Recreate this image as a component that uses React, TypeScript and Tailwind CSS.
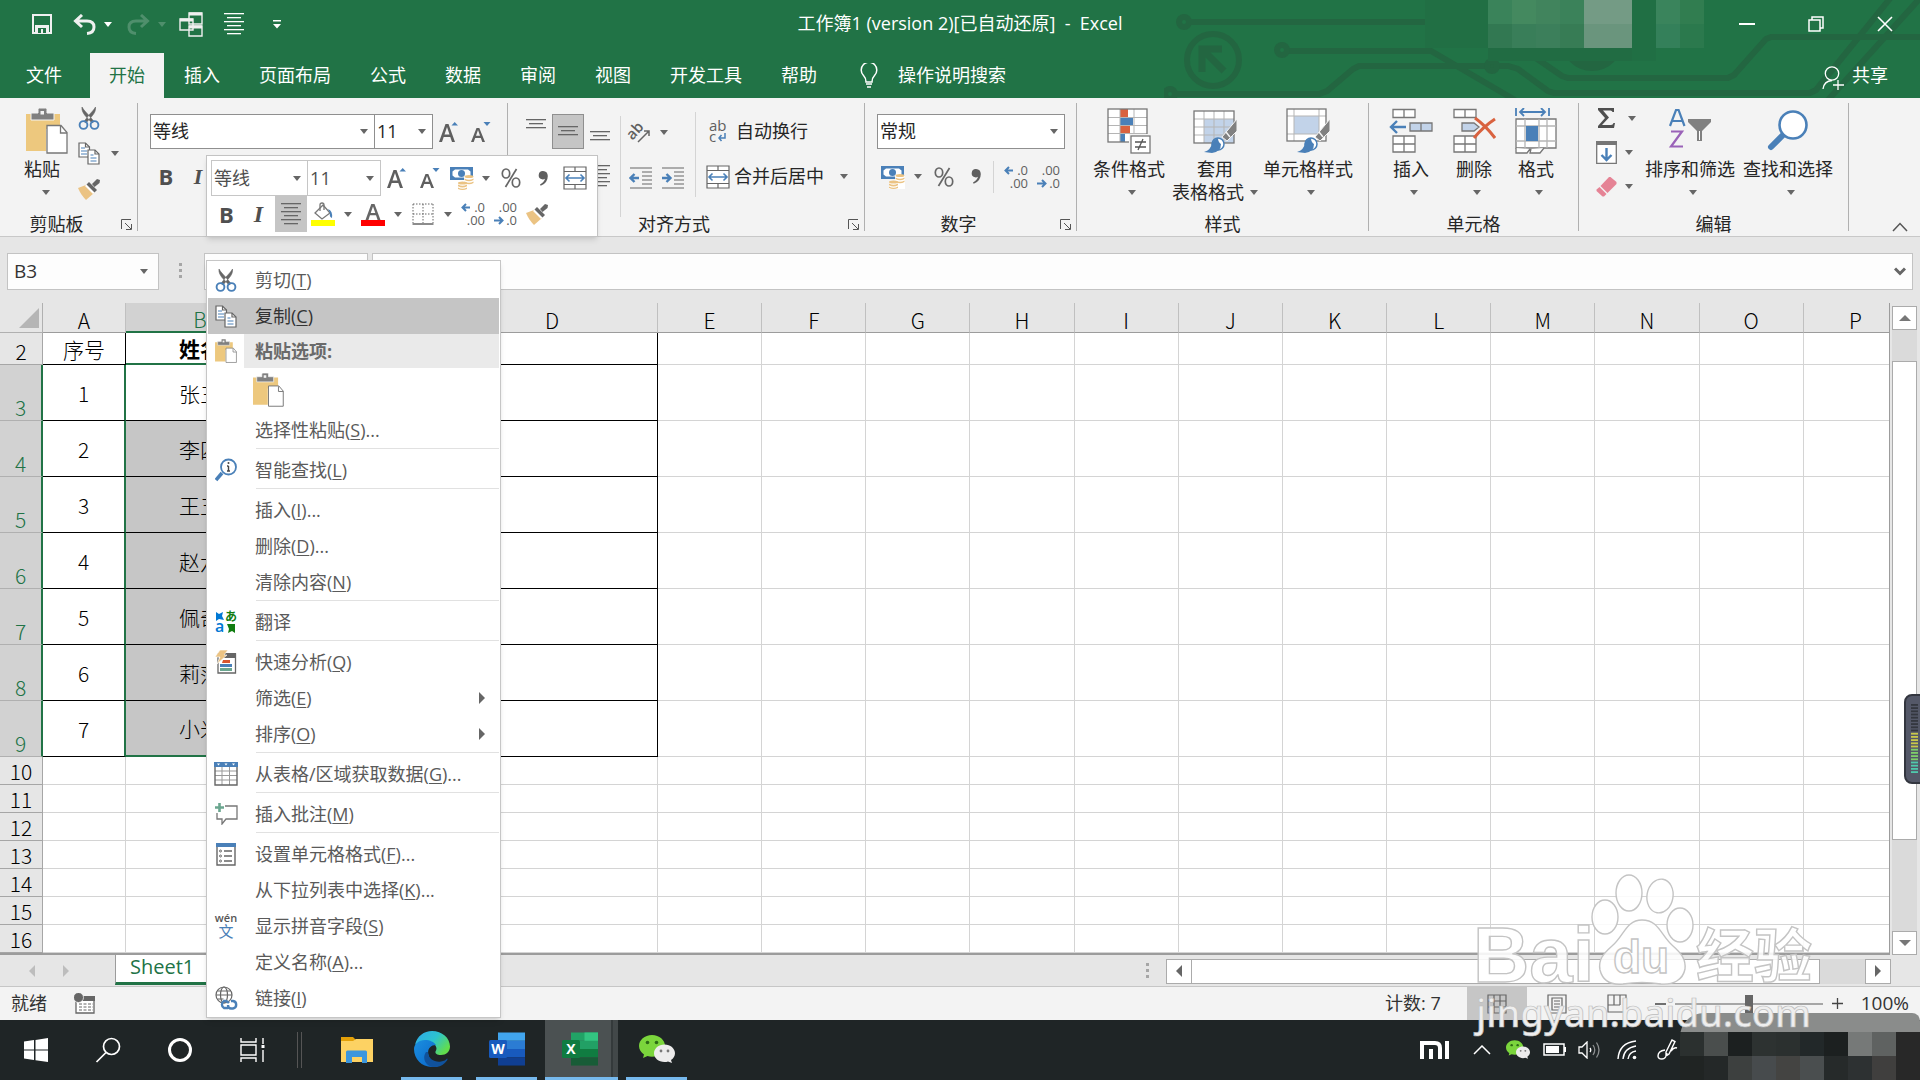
import type { ReactNode } from "react";

type IconProps = { className?: string };

/* ---------- small shared glyphs ---------- */

function Caret({ className = "text-[#666666]" }: IconProps) {
  return (
    <svg width="8" height="5" viewBox="0 0 8 5" className={`shrink-0 ${className}`}>
      <path d="M0 0h8L4 5z" fill="currentColor" />
    </svg>
  );
}

function Launcher() {
  return (
    <svg width="11" height="11" viewBox="0 0 11 11" fill="none" stroke="#555" strokeWidth="1">
      <path d="M.5 10V.5H10M4 4l6 6M10.500 5v5.500H5" />
    </svg>
  );
}

function Lines({ rows, className = "text-[#666666]" }: { rows: [number, number][]; className?: string }) {
  return (
    <svg width="22" height={rows.length * 4 + 1} viewBox={`0 0 22 ${rows.length * 4 + 1}`} className={className}>
      {rows.map(([x, w], i) => (
        <rect key={i} x={x} y={i * 4 + 1} width={w} height="1.300" fill="currentColor" />
      ))}
    </svg>
  );
}

const centered: [number, number][] = [[1, 20], [4, 14], [1, 20], [4, 14], [1, 20], [4, 14]];
const short3: [number, number][] = [[1, 20], [4, 14], [1, 20]];

function ScissorsIcon() {
  return (
    <svg width="22" height="23" viewBox="0 0 22 23" fill="none">
      <path d="M4 0C3.500 3 5 6 7 8.500L14 16l2-1.500L10.500 8C8 5 5.500 3 4 0zM17.500 0c.5 3-1 6-3 8.500L8 16l-2-1.500L11 8c2.500-3 5-5 6.500-8z" fill="#666" stroke="#666" strokeWidth=".6" />
      <circle cx="5.500" cy="18" r="3.900" stroke="#4a80b8" strokeWidth="1.900" />
      <circle cx="16.500" cy="18" r="3.900" stroke="#4a80b8" strokeWidth="1.900" />
    </svg>
  );
}

function CopyIcon() {
  return (
    <svg width="22" height="23" viewBox="0 0 22 23" fill="#fff" stroke="#666" strokeWidth="1.200">
      <path d="M1 1h6.500l4 4v10H1z" />
      <path d="M7.500 1v4h4" fill="none" />
      <path d="M3 6h4M3 9h6M3 12h6" stroke="#4a80b8" />
      <path d="M10 8h7l4 4v10H10z" />
      <path d="M17 8v4h4" fill="none" />
      <path d="M12.500 13h3M12.500 16h6M12.500 19h6" stroke="#4a80b8" />
    </svg>
  );
}

function BrushIcon() {
  return (
    <svg width="24" height="22" viewBox="0 0 24 22">
      <path d="M1 10l8-3 8 8-8 7C6 19 3 15 1 10z" fill="#ebc383" />
      <path d="M8 8l3-3 8 8-3 3z" fill="#fff" />
      <path d="M9.500 6.500L12 4l8 8-2.500 2.500z" fill="#666" />
      <path d="M15 6l5-5 3 1-.500 3-5 4z" fill="#666" />
    </svg>
  );
}

function PasteIcon({ className = "w-[42px] h-[46px]" }: IconProps) {
  return (
    <svg viewBox="0 0 42 46" className={className}>
      <path d="M0 6h34v15H20v22H0z" fill="#edc87e" />
      <path d="M5 5h7V1.500A1.500 1.500 0 0 1 13.500 0h6A1.500 1.500 0 0 1 21 1.500V5h7v7H5z" fill="#808080" stroke="#f3f3f3" />
      <rect x="14.500" y="3" width="3.500" height="3.500" fill="#f3f3f3" />
      <path d="M21 17.500h14l6 7V45H21z" fill="#fff" stroke="#777" strokeWidth="1.300" />
      <path d="M34.500 18v7H41" fill="none" stroke="#777" strokeWidth="1.300" />
    </svg>
  );
}

function FontSizeIcon({ grow }: { grow?: boolean }) {
  return (
    <svg width="22" height="24" viewBox="0 0 22 24">
      {grow ? (
        <>
          <path d="M1 22L7.500 4h3L17 22h-3l-1.700-5H5.700L4 22zM6.500 14.500h5L9 7z" fill="#5f5f5f" />
          <path d="M13.500 5.500h6.500L16.700 2z" fill="#4a80b8" />
        </>
      ) : (
        <>
          <path d="M1 22L6.500 8h2.800L15 22h-2.700l-1.500-4H5.200l-1.500 4zM6 15.700h4L8 10z" fill="#5f5f5f" />
          <path d="M13.500 2h7L17 6z" fill="#4a80b8" />
        </>
      )}
    </svg>
  );
}

function CurrencyIcon() {
  return (
    <svg width="24" height="24" viewBox="0 0 24 24">
      <rect x="0" y="1" width="23" height="13" fill="#4a80b8" />
      <path d="M2.500 5.500L5 3.500h13l2.500 2v4l-2.500 2H5l-2.500-2z" fill="#fff" />
      <circle cx="11.500" cy="7.500" r="3.500" fill="#4a80b8" />
      <path d="M14 10h10v14H8v-7h6z" fill="#fff" />
      <g fill="#ebc383">
        <ellipse cx="19" cy="10.500" rx="4.500" ry="1.600" />
        <path d="M14.500 12.500q4.500 2.500 9 0v1.600q-4.500 2.500-9 0zM14.500 15.500q4.500 2.500 9 0v1.600q-4.500 2.500-9 0z" />
        <ellipse cx="12.500" cy="17" rx="4.500" ry="1.500" />
        <path d="M8 18.600q4.500 2.500 9 0v1.600q-4.500 2.500-9 0zM8 21.400q4.500 2.500 9 0v1.600q-4.500 2-9 0z" />
      </g>
    </svg>
  );
}

function CommaIcon() {
  return (
    <svg width="11" height="15" viewBox="0 0 11 15">
      <path d="M5 0a4.200 4.200 0 0 0-1 8.300q1.500.300 3-.500Q6 11.500 2 13.500l.7 1.300Q9.800 12 9.800 5 9.600.2 5 0z" fill="#5f5f5f" />
    </svg>
  );
}

function PercentIcon() {
  return (
    <svg width="20" height="20" viewBox="0 0 20 20" fill="none" stroke="#666" strokeWidth="1.700">
      <ellipse cx="5" cy="5.500" rx="3.700" ry="4.500" />
      <ellipse cx="15" cy="14.500" rx="3.700" ry="4.500" />
      <path d="M15.500 1L4.500 19" />
    </svg>
  );
}

function MergeIcon() {
  return (
    <svg width="24" height="24" viewBox="0 0 24 24" fill="#fff" stroke="#666" strokeWidth="1.200">
      <path d="M1 1h22v22H1zM1 5.500h22M1 18.500h22M12 1v4.500M12 18.500V23" />
      <path d="M3 12h18M6.500 8.500L3 12l3.500 3.500M17.500 8.500L21 12l-3.500 3.500" stroke="#4a80b8" strokeWidth="1.600" fill="none" />
    </svg>
  );
}

function DecimalIcon({ less }: { less?: boolean }) {
  return (
    <svg width="24" height="24" viewBox="0 0 24 24" fill="#5f5f5f" fontFamily="Open Sans, sans-serif" fontSize="13" className="overflow-visible">
      <text x="24" y="10" textAnchor="end">{less ? ".00" : ".0"}</text>
      <text x="24" y="23" textAnchor="end">{less ? ".0" : ".00"}</text>
      {less ? (
        <path d="M1 18.500h8M6 15l3.500 3.500L6 22" fill="none" stroke="#4a80b8" strokeWidth="2" />
      ) : (
        <path d="M9 5.500H2M5 2L1.500 5.500 5 9" fill="none" stroke="#4a80b8" strokeWidth="2" />
      )}
    </svg>
  );
}

function IndentIcon({ right }: { right?: boolean }) {
  return (
    <svg width="24" height="22" viewBox="0 0 24 22" fill="none" stroke="#666" strokeWidth="1.200">
      <path d="M1 1h22M13 5h10M13 9h10M13 13h10M13 17h10M1 21h22" />
      {right ? (
        <path d="M1 11h8M5.500 7l4 4-4 4" stroke="#4a80b8" strokeWidth="2.400" />
      ) : (
        <path d="M10 11H2M5.500 7l-4 4 4 4" stroke="#4a80b8" strokeWidth="2.400" />
      )}
    </svg>
  );
}

function OrientationIcon() {
  return (
    <svg width="22" height="22" viewBox="0 0 22 22" className="overflow-visible">
      <text x="0" y="16" transform="rotate(-48 6 14)" fontSize="15" fontWeight="600" fill="#5f5f5f" fontFamily="Open Sans, sans-serif">ab</text>
      <path d="M9 21L20 10M15 10h5v5" fill="none" stroke="#666" strokeWidth="1.500" />
    </svg>
  );
}

function WrapIcon() {
  return (
    <svg width="20" height="24" viewBox="0 0 20 24" fontFamily="Open Sans, sans-serif" fontSize="15" fill="#5f5f5f" className="overflow-visible">
      <text x="1" y="11">ab</text>
      <text x="1" y="22">c</text>
      <path d="M17 13v5h-6M13.500 15L11 18l2.500 3" fill="none" stroke="#4a80b8" strokeWidth="1.500" />
    </svg>
  );
}

function BucketIcon() {
  return (
    <svg width="24" height="24" viewBox="0 0 24 24">
      <path d="M4 11l8-8 7 8-8 6z" fill="#fff" stroke="#777" strokeWidth="1.300" />
      <path d="M9 9V3q0-2 2-2t2 2v5" fill="none" stroke="#777" strokeWidth="1.300" />
      <path d="M17 7q5 2 4 9-3-1-2-5z" fill="#4a80b8" />
      <rect y="18" width="24" height="6" fill="#ffff00" />
    </svg>
  );
}

function FontColorIcon() {
  return (
    <svg width="24" height="24" viewBox="0 0 24 24">
      <path d="M4.500 18L10.300 2h3.200L19.500 18h-2.900l-1.600-4.700H9L7.400 18zM9.700 11h4.600L12 4.500z" fill="#666" />
      <rect y="18" width="24" height="6" fill="#ff0000" />
    </svg>
  );
}

function BorderIcon() {
  return (
    <svg width="22" height="22" viewBox="0 0 22 22" stroke="#666" fill="none">
      <path d="M1 1h20M1 11h20M1 1v19M11 1v19M21 1v19" strokeDasharray="1.500 1.500" />
      <path d="M.5 21h21" strokeWidth="1.500" />
    </svg>
  );
}

/* ---------- large ribbon icons ---------- */

function ConditionalIcon() {
  return (
    <svg width="44" height="46" viewBox="0 0 44 46">
      <rect x="1" y="1" width="39" height="33" fill="#fff" />
      <rect x="13" y="1" width="8" height="8" fill="#d9623f" />
      <rect x="13" y="10" width="13" height="8" fill="#4a80b8" />
      <rect x="13" y="18" width="10" height="8" fill="#d9623f" />
      <rect x="13" y="26" width="5" height="8" fill="#4a80b8" />
      <path d="M1 9.500h39M1 17.500h39M1 25.500h39M13 1v33M27 1v33" stroke="#b5b5b5" fill="none" />
      <rect x="1" y="1" width="39" height="33" fill="none" stroke="#777" strokeWidth="1.300" />
      <rect x="22" y="26" width="22" height="20" fill="#f3f3f3" />
      <rect x="24" y="28" width="19" height="17" fill="#fff" stroke="#777" strokeWidth="1.300" />
      <path d="M28 34h11M28 39h11M36 31l-5 11" stroke="#555" strokeWidth="1.300" />
    </svg>
  );
}

function StylePen() {
  return (
    <>
      <path d="M44 11v12L34 33l-5-4z" fill="#808080" stroke="#f3f3f3" />
      <path d="M33 24l4 5" stroke="#f3f3f3" strokeWidth="1.500" />
      <circle cx="25" cy="36" r="6" fill="#fff" stroke="#4a80b8" strokeWidth="1.500" />
      <path d="M11 44q7-2 8-9 2-4 6-5 0 4 3 6 0 8-9 9z" fill="#4a80b8" />
    </>
  );
}

function TableStyleIcon() {
  return (
    <svg width="44" height="46" viewBox="0 0 44 46">
      <rect x="1" y="3" width="40" height="32" fill="#fff" />
      <rect x="11" y="11" width="30" height="24" fill="#c2d3e9" />
      <path d="M1 11h40M1 19h40M1 27h40M11 3v32M21 3v32M31 3v32" stroke="#b5b5b5" fill="none" />
      <rect x="1" y="3" width="40" height="32" fill="none" stroke="#777" strokeWidth="1.300" />
      <StylePen />
    </svg>
  );
}

function CellStyleIcon() {
  return (
    <svg width="44" height="46" viewBox="0 0 44 46">
      <rect x="1" y="1" width="39" height="32" fill="#fff" />
      <rect x="8" y="8" width="25" height="18" fill="#c2d3e9" />
      <path d="M1 8h39M1 26h39M8 1v32M33 1v32" stroke="#b5b5b5" fill="none" />
      <rect x="1" y="1" width="39" height="32" fill="none" stroke="#777" strokeWidth="1.300" />
      <StylePen />
    </svg>
  );
}

function InsertCellsIcon() {
  return (
    <svg width="44" height="46" viewBox="0 0 44 46" fill="#fff" stroke="#777" strokeWidth="1.300">
      <path d="M4 1.500h22v8H4zM15 1.500v8M4 28h22v16H4zM4 36h22M15 28v16" />
      <path d="M21 15h22v8H21zM32 15v8" fill="#c2d3e9" />
      <path d="M17 19H2M8 13l-6 6 6 6" stroke="#4a80b8" strokeWidth="2.400" fill="none" />
    </svg>
  );
}

function DeleteCellsIcon() {
  return (
    <svg width="44" height="46" viewBox="0 0 44 46" fill="#fff" stroke="#777" strokeWidth="1.300">
      <path d="M2 1.500h22v8H2zM13 1.500v8M2 28h22v16H2zM2 36h22M13 28v16" />
      <path d="M10 15h12l5 4-5 4H10z" fill="#c2d3e9" />
      <path d="M23 10q11 8 20 20M43 11Q31 19 22 30" stroke="#d9623f" strokeWidth="3" fill="none" />
    </svg>
  );
}

function FormatCellsIcon() {
  return (
    <svg width="44" height="46" viewBox="0 0 44 46" fill="#fff" stroke="#777" strokeWidth="1.300">
      <path d="M2 11h40v29H2z" />
      <path d="M2 18h40M2 33h40M11 11v29M25 11v29M33 11v29" stroke="#b5b5b5" />
      <rect x="12" y="18" width="12" height="15" fill="#4a80b8" stroke="none" />
      <path d="M2 40v5h11l3-4M17 41l-1 4h10l4-5" />
      <path d="M2 0v8M35 0v8M6 4h25M10 0L6 4l4 4M27 0l4 4-4 4" stroke="#4a80b8" strokeWidth="1.800" fill="none" />
    </svg>
  );
}

function SortFilterIcon() {
  return (
    <svg width="44" height="46" viewBox="0 0 44 46">
      <path d="M2 18L8 2h2.600L16.500 18M4.500 13h9.500" fill="none" stroke="#4a80b8" strokeWidth="2.200" />
      <path d="M3 23.500h11L3 38.500h12" fill="none" stroke="#9a62b8" strokeWidth="2.200" />
      <path d="M20 11h23v3l-9 9v10h-5V23l-9-9z" fill="#808080" />
      <path d="M31.500 23v9" stroke="#fff" />
    </svg>
  );
}

function FindIcon() {
  return (
    <svg width="44" height="46" viewBox="0 0 44 46">
      <path d="M18 26L5 39" stroke="#4a80b8" strokeWidth="6" strokeLinecap="round" />
      <circle cx="27" cy="17" r="13.500" fill="#fff" stroke="#4a80b8" strokeWidth="2.600" />
    </svg>
  );
}

/* ---------- ribbon building blocks ---------- */

function BigButton({ icon, lines, className, caretBeside }: { icon: ReactNode; lines: string[]; className: string; caretBeside?: boolean }) {
  return (
    <button type="button" className={`flex flex-col items-center pt-[5px] ${className}`}>
      <span className="flex h-[46px] items-center">{icon}</span>
      <span className="mt-[3px] leading-6 whitespace-nowrap">{lines[0]}</span>
      <span className={`flex h-[22px] items-center leading-[22px] whitespace-nowrap ${caretBeside ? "gap-[6px]" : "pl-[6px]"}`}>
        {caretBeside && lines[1]}
        <Caret />
      </span>
    </button>
  );
}

function Group({ label, launcher, className, inner = "", children }: { label: string; launcher?: boolean; className: string; inner?: string; children: ReactNode }) {
  return (
    <section aria-label={label} className={`flex h-32 shrink-0 flex-col border-r border-[#b0b0b0] ${className}`}>
      <div className={`flex h-[114px] ${inner}`}>{children}</div>
      <div className="flex h-[14px] items-center leading-[14px]">
        <span className={`flex-1 text-center ${launcher ? "pr-2" : ""}`}>{label}</span>
        {launcher && (
          <button type="button" aria-label={`${label}设置`} className="mr-[5px]">
            <Launcher />
          </button>
        )}
      </div>
    </section>
  );
}

function Slot({ label, className = "", children }: { label: string; className?: string; children: ReactNode }) {
  return (
    <button type="button" aria-label={label} className={`flex shrink-0 items-center justify-center ${className}`}>
      {children}
    </button>
  );
}

function Combo({ label, value, className }: { label: string; value: string; className: string }) {
  return (
    <label className={`flex items-center border bg-white pr-[6px] pl-[2px] ${className}`}>
      <select aria-label={label} defaultValue={value} className="min-w-0 flex-1 appearance-none bg-transparent outline-none">
        <option>{value}</option>
      </select>
      <Caret />
    </label>
  );
}

/* ---------- title bar ---------- */

const mosaic: [number, number, number, number, string][] = [
  [1425, 0, 63, 48, "#216f44"],
  [1488, 0, 24, 24, "#3a835a"], [1512, 0, 24, 24, "#44895f"], [1536, 0, 24, 24, "#41845d"], [1560, 0, 24, 24, "#3b825a"],
  [1584, 0, 48, 24, "#749b85"], [1632, 0, 24, 61, "#206f44"], [1656, 0, 24, 24, "#3a845c"], [1680, 0, 24, 24, "#317d50"],
  [1488, 24, 24, 24, "#327852"], [1512, 24, 24, 24, "#397e59"], [1536, 24, 24, 24, "#3c7f5b"], [1560, 24, 24, 24, "#377c55"],
  [1584, 24, 48, 24, "#6a957d"], [1656, 24, 24, 24, "#34805a"], [1680, 24, 24, 24, "#2b794d"],
  [1488, 48, 144, 13, "#216c43"],
];

function Circuit() {
  return (
    <svg width="756" height="98" viewBox="1164 0 756 98" className="absolute top-0 right-0" fill="none" stroke="#236641" strokeWidth="6" aria-hidden="true">
      <circle cx="1184" cy="22" r="5" />
      <path d="M1190 22h235" />
      <circle cx="1213" cy="60" r="26" />
      <path d="M1202 72V49h20M1204 51l20 20" strokeWidth="7" />
      <circle cx="1170" cy="94" r="5" />
      <path d="M1176 94h143l8-3 26-22 6-3h149l10 3 30 22 6 2h256l6-3L1892-4M1288 51h143l84 49M1530 54l32 22 6 2h160l6-3 32-36 5-2h151M1828 100L1922-4" />
      <circle cx="1282" cy="50" r="5" />
      <circle cx="1492" cy="66" r="5" />
      <circle cx="1592" cy="40" r="31" fill="#236641" stroke="none" />
      {mosaic.map(([x, y, w, h, fill]) => (
        <rect key={`${x}-${y}`} x={x} y={y} width={w} height={h} fill={fill} stroke="none" />
      ))}
    </svg>
  );
}

function TitleBar() {
  return (
    <div className="relative grid h-[53px] grid-cols-[1fr_auto_1fr] items-start text-white">
      <div className="flex h-12 items-center pl-8">
        <Slot label="保存">
          <svg width="20" height="20" viewBox="0 0 20 20" fill="none" stroke="#f0f0f0" strokeWidth="2">
            <path d="M1 1h18v18H1z" />
            <path d="M3 11h14v8H3z" fill="#f0f0f0" stroke="none" />
            <path d="M6 14h8v5H6z" fill="#217346" stroke="none" />
            <path d="M9 15h2v4H9z" fill="#f0f0f0" stroke="none" />
          </svg>
        </Slot>
        <Slot label="撤消" className="ml-[21px]">
          <svg width="23" height="21" viewBox="0 0 23 21" fill="none" stroke="#f0f0f0" strokeWidth="3">
            <path d="M9 1L2.500 7 9 13M3 7h11q7 0 7 6 0 6-7 6.500" />
          </svg>
        </Slot>
        <Slot label="撤消列表" className="ml-2"><Caret className="text-white" /></Slot>
        <Slot label="恢复" className="ml-[15px]">
          <svg width="23" height="21" viewBox="0 0 23 21" fill="none" stroke="#4f8f6c" strokeWidth="3">
            <path d="M14 1l6.500 6L14 13M20 7H9q-7 0-7 6 0 6 7 6.500" />
          </svg>
        </Slot>
        <Slot label="恢复列表" className="ml-2"><Caret className="text-[#4f8f6c]" /></Slot>
        <Slot label="切换窗口" className="ml-[13px]">
          <svg width="24" height="25" viewBox="0 0 24 25" fill="#217346" stroke="#f0f0f0" strokeWidth="1.400">
            <path d="M10 1h13v11H10zM1 7h13v11H1zM10 14h13v10H10z" />
            <path d="M10 2h13M1 8h13M10 15h13" strokeWidth="3" />
          </svg>
        </Slot>
        <Slot label="居中" className="ml-5"><Lines rows={centered} className="text-white" /></Slot>
        <Slot label="自定义快速访问工具栏" className="ml-7">
          <svg width="8" height="9" viewBox="0 0 8 9" fill="#fff"><path d="M0 0h8v1.500H0zM0 4h8L4 8.500z" /></svg>
        </Slot>
      </div>
      <h1 className="h-12 leading-[47px] whitespace-pre">工作簿1 (version 2)[已自动还原]  -  Excel</h1>
      <div className="flex h-[47px] items-center justify-end pr-[27px]">
        <Slot label="最小化" className="w-4">
          <svg width="16" height="2"><rect width="16" height="2" fill="#fff" /></svg>
        </Slot>
        <Slot label="向下还原" className="ml-[53px] w-4">
          <svg width="16" height="16" viewBox="0 0 16 16" fill="none" stroke="#fff" strokeWidth="1.500">
            <path d="M1 4h11v11H1zM4 4V1h11v11h-3" />
          </svg>
        </Slot>
        <Slot label="关闭" className="ml-[53px] w-4">
          <svg width="16" height="16" viewBox="0 0 16 16" stroke="#fff" strokeWidth="1.600"><path d="M1 1l14 14M15 1L1 15" /></svg>
        </Slot>
      </div>
    </div>
  );
}

const tabs = ["插入", "页面布局", "公式", "数据", "审阅", "视图", "开发工具", "帮助"];

function TabBar() {
  return (
    <nav className="relative flex h-[45px] items-stretch pl-[7px] text-white">
      <button type="button" className="mr-[9px] px-[19px]">文件</button>
      <div className="flex gap-px">
        <button type="button" className="bg-[#f3f3f3] px-[19px] text-[#217346]">开始</button>
        {tabs.map((tab) => (
          <button key={tab} type="button" className="px-[19px]">{tab}</button>
        ))}
      </div>
      <button type="button" className="ml-6 flex items-center gap-5">
        <svg width="18" height="25" viewBox="0 0 18 25" fill="none" stroke="#fff" strokeWidth="1.500">
          <path d="M6 19q0-4-2.500-6.500A7.800 7.800 0 1 1 14.500 12.500Q12 15 12 19zM6 21h6M7 24h4" />
        </svg>
        操作说明搜索
      </button>
      <button type="button" className="mr-8 ml-auto flex items-center gap-2">
        <svg width="22" height="24" viewBox="0 0 22 24" fill="none" stroke="#fff" strokeWidth="1.300" className="mt-1">
          <circle cx="10" cy="7.500" r="6.700" />
          <path d="M1 23q1-8 9-8.500M16 14v10M11 19h11" />
        </svg>
        共享
      </button>
    </nav>
  );
}

/* ---------- ribbon ---------- */

function Ribbon() {
  return (
    <div className="flex h-[139px] overflow-hidden border-b border-[#c8c8c8] bg-[#f3f3f3] pt-[5px] text-[#262626]">
      <Group label="剪贴板" launcher className="w-[138px]">
        <button type="button" className="ml-6 flex w-12 flex-col items-start pt-[5px]">
          <span className="flex h-[46px] items-center pl-[2px]"><PasteIcon /></span>
          <span className="mt-[3px] leading-6">粘贴</span>
          <span className="flex h-[22px] items-center pl-[18px]"><Caret /></span>
        </button>
        <div className="ml-[5px] flex flex-col gap-3 pt-1">
          <Slot label="剪切" className="h-[23px] w-6"><ScissorsIcon /></Slot>
          <span className="flex items-center gap-[10px]">
            <Slot label="复制" className="h-[23px] w-6"><CopyIcon /></Slot>
            <Caret />
          </span>
          <Slot label="格式刷" className="h-[23px] w-6"><BrushIcon /></Slot>
        </div>
      </Group>

      <Group label="字体" launcher className="w-[370px]">
        <div className="flex flex-col gap-[10px] pt-[11px] pl-3">
          <div className="flex h-[35px]">
            <Combo label="字体名称" value="等线" className="w-[225px] border-[#8f8f8f]" />
            <Combo label="字号" value="11" className="-ml-px w-[59px] border-[#8f8f8f]" />
            <Slot label="增大字号" className="w-8"><FontSizeIcon grow /></Slot>
            <Slot label="减小字号" className="w-8"><FontSizeIcon /></Slot>
          </div>
          <div className="flex h-[35px] text-[22px] text-[#4f4f4f]">
            <Slot label="加粗" className="w-8 font-bold">B</Slot>
            <Slot label="倾斜" className="w-8 font-['Liberation_Serif',serif] font-bold italic">I</Slot>
          </div>
        </div>
      </Group>

      <Group label="对齐方式" launcher className="w-[357px]">
        <div className="flex flex-col gap-[10px] pt-[11px] pl-3">
          <div className="flex h-[35px]">
            <Slot label="顶端对齐" className="w-8 pb-[14px]"><Lines rows={short3} /></Slot>
            <Slot label="垂直居中" className="w-8 border border-[#8f8f8f] bg-[#c5c5c5]"><Lines rows={short3} /></Slot>
            <Slot label="底端对齐" className="w-8 pt-[10px]"><Lines rows={short3} /></Slot>
          </div>
          <div className="flex h-[35px] pl-16">
            <Slot label="右对齐" className="w-8"><Lines rows={centered} /></Slot>
          </div>
        </div>
        <div className="mt-[13px] ml-1 flex flex-col gap-[14px] border-l border-[#d4d4d4] pl-2">
          <span className="flex h-8 items-center gap-[9px]">
            <Slot label="方向"><OrientationIcon /></Slot>
            <Caret />
          </span>
          <span className="flex h-8 items-center gap-2">
            <Slot label="减少缩进量"><IndentIcon /></Slot>
            <Slot label="增加缩进量"><IndentIcon right /></Slot>
          </span>
        </div>
        <div className="mt-[9px] mb-5 ml-[10px] flex flex-col gap-[10px] border-l border-[#d4d4d4] pt-[2px] pl-[10px]">
          <button type="button" className="flex h-[35px] items-center gap-2 pl-[2px]"><WrapIcon />自动换行</button>
          <button type="button" className="flex h-[35px] items-center gap-1">
            <MergeIcon />合并后居中<span className="w-2" /><Caret />
          </button>
        </div>
      </Group>

      <Group label="数字" launcher className="w-[212px]">
        <div className="flex flex-col gap-[10px] pt-[11px] pl-3">
          <Combo label="数字格式" value="常规" className="h-[35px] w-[188px] border-[#8f8f8f]" />
          <div className="flex h-[35px] items-center">
            <span className="flex w-[46px] items-center gap-[9px] pl-1">
              <Slot label="会计数字格式"><CurrencyIcon /></Slot>
              <Caret />
            </span>
            <Slot label="百分比样式" className="w-[42px]"><PercentIcon /></Slot>
            <Slot label="千位分隔样式" className="w-[22px]"><CommaIcon /></Slot>
            <span className="mx-[6px] h-8 border-l border-[#d4d4d4]" />
            <Slot label="增加小数位数" className="w-8"><DecimalIcon /></Slot>
            <Slot label="减少小数位数" className="w-8"><DecimalIcon less /></Slot>
          </div>
        </div>
      </Group>

      <Group label="样式" className="w-[292px]" inner="pl-3">
        <BigButton icon={<ConditionalIcon />} lines={["条件格式"]} className="w-20" />
        <BigButton icon={<TableStyleIcon />} lines={["套用", "表格格式"]} caretBeside className="w-[92px]" />
        <BigButton icon={<CellStyleIcon />} lines={["单元格样式"]} className="w-[94px]" />
      </Group>

      <Group label="单元格" className="w-[210px]" inner="pl-[10px]">
        <BigButton icon={<InsertCellsIcon />} lines={["插入"]} className="w-16" />
        <BigButton icon={<DeleteCellsIcon />} lines={["删除"]} className="w-[62px]" />
        <BigButton icon={<FormatCellsIcon />} lines={["格式"]} className="w-[62px]" />
      </Group>

      <Group label="编辑" className="w-[270px]">
        <div className="ml-[17px] flex w-[46px] flex-col gap-3 pt-1">
          <span className="flex h-[22px] items-center gap-3">
            <Slot label="自动求和">
              <svg width="20" height="20" viewBox="0 0 20 20"><path d="M2 0h16v4h-1.500q-.5-1.500-2-1.500H7l6 7L6 17h9q2 0 2.500-2H19l-1 5H2v-2l7-8-7-8z" fill="#4f4f4f" /></svg>
            </Slot>
            <Caret />
          </span>
          <span className="flex h-[22px] items-center gap-2">
            <Slot label="填充">
              <svg width="21" height="23" viewBox="0 0 21 23"><path d="M.7.700h19.600v21.600H.700z" fill="#fff" stroke="#777" strokeWidth="1.300" /><path d="M0 0h21v4H0z" fill="#777" /><path d="M10.500 7v12M5.500 14l5 5 5-5" fill="none" stroke="#4a80b8" strokeWidth="2.400" /></svg>
            </Slot>
            <Caret />
          </span>
          <span className="flex h-[22px] items-center gap-2">
            <Slot label="清除">
              <svg width="21" height="21" viewBox="0 0 21 21" fill="#e58395"><path d="M13 1h1.500l6 5v2l-9 9-7-7z" /><path d="M3.500 11l7 7-2.500 2.500H6.500L.500 15v-1.500z" /></svg>
            </Slot>
            <Caret />
          </span>
        </div>
        <BigButton icon={<SortFilterIcon />} lines={["排序和筛选"]} className="w-24" />
        <BigButton icon={<FindIcon />} lines={["查找和选择"]} className="w-[100px]" />
      </Group>

      <button type="button" aria-label="折叠功能区" className="mr-3 mb-1 ml-auto self-end">
        <svg width="16" height="10" viewBox="0 0 16 10" fill="none" stroke="#555" strokeWidth="1.500"><path d="M1 9l7-7.500L15 9" /></svg>
      </button>
    </div>
  );
}

function Dots() {
  return (
    <svg width="3" height="16" viewBox="0 0 3 16" fill="#a6a6a6"><path d="M0 0h3v3H0zM0 6h3v3H0zM0 12h3v3H0z" /></svg>
  );
}

function FormulaBar() {
  return (
    <div className="flex h-[66px] items-start bg-[#e6e6e6] px-[7px] pt-4">
      <label className="flex h-[37px] w-[152px] items-center border border-[#c3c3c3] bg-[#fdfdfd] pr-[10px] pl-[6px]">
        <input aria-label="名称框" defaultValue="B3" className="min-w-0 flex-1 bg-transparent text-[19px] text-[#333] outline-none" />
        <Caret />
      </label>
      <span className="mt-[10px] ml-5"><Dots /></span>
      <div className="ml-[22px] h-[37px] w-[164px] border border-[#c3c3c3] bg-[#fdfdfd]" />
      <label className="ml-1 flex h-[37px] flex-1 items-center border border-[#c3c3c3] bg-[#fdfdfd] pr-[6px]">
        <input aria-label="编辑栏" className="min-w-0 flex-1 bg-transparent outline-none" />
        <svg width="12" height="9" viewBox="0 0 12 9" fill="none" stroke="#666" strokeWidth="3"><path d="M1 1.500l5 5 5-5" /></svg>
      </label>
    </div>
  );
}

/* ---------- sheet ---------- */

const columns = ["A", "B", "C", "D", "E", "F", "G", "H", "I", "J", "K", "L", "M", "N", "O", "P"];
const people = ["张三", "李四", "王五", "赵六", "佩奇", "莉莎", "小米"];

const rows = [
  { n: 2, cells: ["序号", "姓名"] },
  ...people.map((name, i) => ({ n: i + 3, cells: [String(i + 1), name] })),
  ...[10, 11, 12, 13, 14, 15, 16].map((n) => ({ n, cells: [] as string[] })),
];

function cellClass(n: number, c: number) {
  const picked = n >= 3 && n <= 9;
  if (n > 9 || c > 3) return "border-r border-b border-[#d4d4d4]";
  if (c === 0) return picked ? "border-r-2 border-b border-r-[#217346] border-b-black" : "border-r border-b border-black";
  if (c === 1) {
    const fill = n > 3 ? "bg-[#c6c6c6]" : "";
    const weight = n === 2 ? "font-bold" : "";
    const edge = n === 2 || n === 9 ? "border-r border-b-2 border-r-black border-b-[#217346]" : "border-r border-b border-black";
    return `${fill} ${weight} ${edge}`;
  }
  return "border-r border-b border-black";
}

function Sheet() {
  return (
    <div className="flex min-h-0 flex-1 bg-[#e6e6e6]">
      <div className="min-w-0 flex-1 overflow-hidden border-r border-b-2 border-[#9c9c9c] bg-white">
        <table className="w-[1908px] table-fixed border-separate border-spacing-0 font-['Noto_Sans_CJK_SC',sans-serif] text-[21px] font-light text-black">
          <colgroup>
            <col className="w-[43px]" />
            <col className="w-[83px]" />
            <col className="w-[149px]" />
            <col className="w-[172px]" />
            <col className="w-[211px]" />
          </colgroup>
          <thead>
            <tr className="h-[30px] bg-[#e6e6e6]">
              <th className="border-r border-b border-[#b0b0b0] p-0 align-bottom">
                <svg width="20" height="20" viewBox="0 0 20 20" className="mb-1 ml-[19px]"><path d="M20 0v20H0z" fill="#b5b5b5" /></svg>
              </th>
              {columns.map((col) => (
                <th
                  key={col}
                  scope="col"
                  className={
                    col === "B"
                      ? "border-r border-b-2 border-r-[#b0b0b0] border-b-[#217346] bg-[#d2d2d2] p-0 pt-1 leading-6 font-light text-[#217346]"
                      : "border-r border-b border-r-[#c0c0c0] border-b-[#9c9c9c] p-0 pt-1 leading-6 font-light"
                  }
                >
                  {col}
                </th>
              ))}
            </tr>
          </thead>
          <tbody>
            {rows.map(({ n, cells }) => {
              const picked = n >= 3 && n <= 9;
              return (
                <tr key={n} className={picked ? "h-14" : n === 2 ? "h-8" : "h-7"}>
                  <th
                    scope="row"
                    className={
                      picked
                        ? "border-r-2 border-b border-r-[#217346] border-b-[#b0b0b0] bg-[#d2d2d2] p-0 align-bottom leading-[26px] font-light text-[#217346]"
                        : "border-r border-b border-[#a6a6a6] bg-[#e6e6e6] p-0 align-bottom leading-[26px] font-light"
                    }
                  >
                    {n}
                  </th>
                  {columns.map((col, c) => (
                    <td key={col} className={`p-0 text-center leading-6 ${cellClass(n, c)}`}>{cells[c]}</td>
                  ))}
                </tr>
              );
            })}
          </tbody>
        </table>
      </div>
      <div className="ml-[2px] flex w-7 flex-col pt-[3px] pr-[3px]">
        <button type="button" aria-label="向上滚动" className="flex h-6 items-center justify-center border border-[#ababab] bg-white">
          <svg width="12" height="6" viewBox="0 0 12 6"><path d="M0 6h12L6 0z" fill="#777" /></svg>
        </button>
        <div className="flex min-h-0 flex-1 flex-col bg-[#dadada] pt-[31px] pb-[91px]">
          <div className="flex-1 border border-[#ababab] bg-white" />
        </div>
        <button type="button" aria-label="向下滚动" className="flex h-6 items-center justify-center border border-[#ababab] bg-white">
          <svg width="12" height="6" viewBox="0 0 12 6"><path d="M0 0h12L6 6z" fill="#777" /></svg>
        </button>
      </div>
    </div>
  );
}

function SideArrow({ left, className = "text-[#666666]" }: { left?: boolean; className?: string }) {
  return (
    <svg width="6" height="12" viewBox="0 0 6 12" className={className}>
      <path d={left ? "M6 0v12L0 6z" : "M0 0v12l6-6z"} fill="currentColor" />
    </svg>
  );
}

function SheetTabs() {
  return (
    <div className="flex h-8 items-start border-b border-[#c6c6c6] bg-[#e6e6e6] pl-[29px]">
      <Slot label="上一个工作表" className="h-8"><SideArrow left className="text-[#bdbdbd]" /></Slot>
      <Slot label="下一个工作表" className="ml-7 h-8"><SideArrow className="text-[#bdbdbd]" /></Slot>
      <button type="button" className="ml-[46px] flex h-[30px] items-start border-b-[3px] border-l border-b-[#217346] border-l-[#9c9c9c] bg-white px-[14px] text-[20px] leading-6 text-[#217346]">
        Sheet1
      </button>
      <div className="ml-auto flex h-8 items-center pr-[29px]">
        <Dots />
        <div className="ml-[17px] flex h-[25px] w-[725px]">
          <button type="button" aria-label="向左滚动" className="flex w-[26px] items-center justify-center border border-[#ababab] bg-white"><SideArrow left /></button>
          <div className="flex flex-1 bg-[#dadada] pr-[45px]">
            <div className="-ml-px flex-1 border border-[#ababab] bg-white" />
          </div>
          <button type="button" aria-label="向右滚动" className="flex w-[26px] items-center justify-center border border-[#ababab] bg-white"><SideArrow /></button>
        </div>
      </div>
    </div>
  );
}

function StatusBar() {
  return (
    <div className="flex h-[33px] items-center bg-[#f3f3f3] pl-[11px] text-[#333]">
      <span>就绪</span>
      <button type="button" aria-label="宏录制" className="ml-[27px]">
        <svg width="21" height="21" viewBox="0 0 21 21">
          <path d="M2 4h18v16H2z" fill="#fff" stroke="#666" strokeWidth="1.300" />
          <path d="M2 3h19v5H2z" fill="#666" />
          <path d="M5 11h14M5 14h14M5 17h14" stroke="#666" strokeDasharray="3 1.500" />
          <circle cx="4.500" cy="4.500" r="5" fill="#666" stroke="#f3f3f3" strokeWidth=".8" />
        </svg>
      </button>
      <span className="mr-[26px] ml-auto">计数: 7</span>
      <Slot label="普通" className="h-full w-[60px] bg-[#c6c6c6]">
        <svg width="20" height="20" viewBox="0 0 20 20" fill="none" stroke="#666" strokeWidth="1.200"><path d="M1 1h18v18H1zM1 7h18M1 13h18M7 1v18M13 1v18" /></svg>
      </Slot>
      <Slot label="页面布局视图" className="h-full w-[60px]">
        <svg width="20" height="20" viewBox="0 0 20 20" fill="none" stroke="#666" strokeWidth="1.200"><path d="M1 1h18v18H1zM5 4h10v12H5zM7 7h6M7 10h6M7 13h6" /></svg>
      </Slot>
      <Slot label="分页预览" className="h-full w-[60px]">
        <svg width="20" height="20" viewBox="0 0 20 20" fill="none" stroke="#666" strokeWidth="1.200"><path d="M1 1h18v17H1zM7 1v10M13 1v10M1 11h12" /></svg>
      </Slot>
      <Slot label="缩小" className="ml-2 w-[11px]"><svg width="11" height="2"><path d="M0 1h11" stroke="#444" strokeWidth="1.500" /></svg></Slot>
      <input
        type="range"
        aria-label="缩放"
        defaultValue={50}
        className="mx-[9px] h-5 w-[148px] appearance-none bg-transparent [&::-webkit-slider-runnable-track]:h-[2px] [&::-webkit-slider-runnable-track]:bg-[#a6a6a6] [&::-webkit-slider-thumb]:-mt-2 [&::-webkit-slider-thumb]:h-[18px] [&::-webkit-slider-thumb]:w-2 [&::-webkit-slider-thumb]:appearance-none [&::-webkit-slider-thumb]:bg-[#666666]"
      />
      <Slot label="放大" className="w-[11px]"><svg width="11" height="11"><path d="M0 5.500h11M5.500 0v11" stroke="#444" strokeWidth="1.300" /></svg></Slot>
      <span className="mr-[11px] ml-[18px] text-[19px]">100%</span>
    </div>
  );
}

/* ---------- taskbar ---------- */

function WeChatIcon({ className = "w-9 h-7" }: IconProps) {
  return (
    <svg viewBox="0 0 36 28" className={className}>
      <path d="M13 0C5.500 0 0 5 0 11c0 3.500 2 6.500 5 8.500L4 23l4.500-2q2 .7 4.500.7c7.500 0 13-5 13-10.800S20.500 0 13 0z" fill="#7bd53c" />
      <circle cx="8.500" cy="7.500" r="1.800" fill="#2c6b16" /><circle cx="17.500" cy="7.500" r="1.800" fill="#2c6b16" />
      <path d="M25.500 9.500C19.500 9.500 15 13.500 15 18.300S19.500 27 25.500 27q2 0 3.500-.5l4 1.500-1-3c2.500-1.500 4-4 4-6.700 0-4.800-4.500-8.800-10.500-8.800z" fill="#ececec" />
      <circle cx="22" cy="16" r="1.400" fill="#777" /><circle cx="29" cy="16" r="1.400" fill="#777" />
    </svg>
  );
}

function OfficeIcon({ letter, shades, badge }: { letter: string; shades: string[]; badge: string }) {
  return (
    <svg width="36" height="34" viewBox="0 0 36 34">
      {shades.map((fill, i) => (
        <rect key={fill} x="9" y={i * 8.25 + 0.5} width="27" height="8.300" fill={fill} />
      ))}
      {letter === "X" && <path d="M22.500.500H36v8.300H22.500z" fill="#33c481" />}
      <rect x="0" y="8" width="18" height="18" rx="1.500" fill={badge} />
      <text x="9" y="22" textAnchor="middle" fontSize="14" fontWeight="700" fill="#fff" fontFamily="Open Sans, sans-serif">{letter}</text>
    </svg>
  );
}

function EdgeIcon() {
  return (
    <svg width="36" height="36" viewBox="0 0 36 36">
      <defs>
        <linearGradient id="edgeTop" x1="0" x2="1" y1="0" y2=".6"><stop offset="0" stopColor="#2fa8ea" /><stop offset=".55" stopColor="#2cc3d0" /><stop offset="1" stopColor="#62dd4c" /></linearGradient>
        <linearGradient id="edgeSide" x1="0" x2="1" y1="0" y2="1"><stop offset="0" stopColor="#1b8fe0" /><stop offset="1" stopColor="#0a66c8" /></linearGradient>
      </defs>
      <path d="M1 14C3 5 10 0 18 0c10 0 18 7 18 15.500 0 5-4 8.500-9 8.500-4 0-6-1.500-5.500-3.500 3-4-1-9.500-8-9.500C8 11 3 12 1 14z" fill="url(#edgeTop)" />
      <path d="M0 18c0-5 5-9 11-9 5 0 9 2 11 5-6 0-9 5-7.500 10C16 30 20 34 24 35 11 39 0 30 0 18z" fill="url(#edgeSide)" />
      <path d="M14 21c0 7 7 10.500 13 9.500 3-.5 5-1.500 6-3q1 0 0 2C29 35 23 37 18 36 11 34 8 27 12 21z" fill="#10529c" />
    </svg>
  );
}

function ExplorerIcon() {
  return (
    <svg width="34" height="28" viewBox="0 0 34 28">
      <path d="M1 1h12l3 3-3 3H1z" fill="#e3a008" />
      <path d="M1 5h12l3-2h17v23H1z" fill="#fdd263" />
      <path d="M6 26V16q0-1.500 1.500-1.500h18Q27 14.500 27 16v11h-5v-6H12v6H6z" fill="#3c96dd" />
    </svg>
  );
}

const tiles = [
  "bg-[#2b302f]", "bg-[#4a4e4d]", "bg-[#1c2020]", "bg-[#2d3231]", "bg-[#2b302f]", "bg-[#222829]", "bg-[#1c2020]", "bg-[#767978]", "bg-[#5f6261]", "bg-[#282828]",
  "bg-[#202423]", "bg-[#242828]", "bg-[#3d403f]", "bg-[#474b4d]", "bg-[#444442]", "bg-[#4a4e4f]", "bg-[#262a2a]", "bg-[#2d3132]", "bg-[#403f3e]", "bg-[#282828]",
];

function Taskbar() {
  return (
    <footer className="relative flex h-[60px] items-stretch bg-[#1f2526] text-white">
      <Slot label="开始菜单" className="w-[72px]">
        <svg width="24" height="24" viewBox="0 0 24 24" fill="#fff"><path d="M0 3.500l10-1.400v9.400H0zM11.500 1.900L24 0v11.500H11.500zM0 12.500h10v9.400L0 20.500zM11.500 12.500H24V24l-12.500-1.800z" /></svg>
      </Slot>
      <Slot label="搜索" className="w-[72px]">
        <svg width="26" height="26" viewBox="0 0 26 26" fill="none" stroke="#fff" strokeWidth="1.700"><circle cx="16.500" cy="9.500" r="8" /><path d="M11 15.500L1.500 25" /></svg>
      </Slot>
      <Slot label="Cortana" className="w-[72px]">
        <svg width="26" height="26" viewBox="0 0 26 26" fill="none" stroke="#fff" strokeWidth="3"><circle cx="13" cy="13" r="10.500" /></svg>
      </Slot>
      <Slot label="任务视图" className="w-[72px]">
        <svg width="25" height="24" viewBox="0 0 25 24" fill="none" stroke="#fff" strokeWidth="1.400"><path d="M1 0v4h15V0M1 7h15v10H1zM1 24v-4h15v4M23 0v6M23 12v12" /><path d="M21.500 7h3v3h-3z" fill="#fff" stroke="none" /></svg>
      </Slot>
      <span className="my-3 ml-[9px] w-[5px] border-x border-[#555]" />
      <div className="ml-6 flex gap-[14px]">
        <Slot label="文件资源管理器" className="w-[61px]"><ExplorerIcon /></Slot>
        <Slot label="Edge" className="w-[61px] border-b-[3px] border-[#76b9ed]"><EdgeIcon /></Slot>
        <span className="flex border-b-[3px] border-[#76b9ed]">
          <Slot label="Word" className="w-[61px]">
            <OfficeIcon letter="W" shades={["#41a5ee", "#2b7cd3", "#185abd", "#103f91"]} badge="#185abd" />
          </Slot>
        </span>
        <span className="-mx-[6px] flex border-b-[3px] border-[#76b9ed] bg-[#4b5152]">
          <Slot label="Excel" className="w-[66px] pl-1">
            <OfficeIcon letter="X" shades={["#21a366", "#22a065", "#107c41", "#185c37"]} badge="#107c41" />
          </Slot>
          <span className="w-[7px] border-l-2 border-[#343a3b] bg-[#424849]" />
        </span>
        <Slot label="微信" className="w-[61px] border-b-[3px] border-[#76b9ed]"><WeChatIcon /></Slot>
      </div>
      <div className="mr-[242px] ml-auto flex items-center pb-[1px]">
        <svg width="29" height="18" viewBox="0 0 29 18" fill="#fff"><path d="M0 0h15q7 0 7 7v11h-4V7q0-3-3-3H4v14H0zM9 8h4v10H9zM25 0h4v18h-4z" /></svg>
        <Slot label="显示隐藏的图标" className="ml-6"><svg width="18" height="10" viewBox="0 0 18 10" fill="none" stroke="#fff" strokeWidth="1.500"><path d="M1 9l8-8 8 8" /></svg></Slot>
        <Slot label="微信消息" className="ml-[15px]"><WeChatIcon className="h-[19px] w-6" /></Slot>
        <svg width="23" height="13" viewBox="0 0 23 13" className="ml-[13px]"><path d="M1 1h20v11H1z" fill="none" stroke="#fff" strokeWidth="1.500" /><path d="M3 3h13v7H3zM21 4h2v5h-2z" fill="#fff" /></svg>
        <svg width="23" height="18" viewBox="0 0 23 18" fill="none" stroke="#fff" strokeWidth="1.300" className="ml-3"><path d="M1 6h3l5-5v16l-5-5H1zM12 7q1.500 2 0 4" /><path d="M15 4q3.500 5 0 10M18.500 1.500q5 7.500 0 15" stroke="#8b8e8f" /></svg>
        <svg width="20" height="20" viewBox="0 0 20 20" fill="none" stroke="#fff" strokeWidth="1.400" className="ml-4"><path d="M1 19Q2 3 19 1M6 19Q7 8 19 6M11 19q1-7 8-8" /><circle cx="17.500" cy="17.500" r="1.800" fill="#fff" stroke="none" /></svg>
        <svg width="21" height="21" viewBox="0 0 21 21" fill="none" stroke="#fff" strokeWidth="1.400" className="ml-5"><path d="M9 13L15 1l3 1.500L12 15l-3 2zM8 11q-7 1-7 6 0 3 4 3t5-6M14 12q3-4 6-3" /></svg>
      </div>
      <div aria-hidden="true" className="absolute right-0 bottom-0 w-[240px] overflow-hidden rounded-tl-[24px] rounded-tr-[8px]">
        <div className="h-[19px] bg-[#8a8c8b]" />
        <div className="grid grid-cols-10">
          {tiles.map((tile, i) => (
            <span key={i} className={`h-6 ${tile}`} />
          ))}
        </div>
      </div>
    </footer>
  );
}

/* ---------- overlays ---------- */

function MiniToolbar() {
  return (
    <div role="toolbar" aria-label="浮动工具栏" className="absolute top-[155px] left-[206px] w-[392px] border border-[#c3c3c3] bg-white p-1 text-[#4f4f4f] shadow-md">
      <div className="flex h-9">
        <Combo label="字体" value="等线" className="w-[98px] border-[#c6c6c6]" />
        <Combo label="字号" value="11" className="-ml-px w-[75px] border-[#c6c6c6]" />
        <Slot label="增大字号" className="w-8"><FontSizeIcon grow /></Slot>
        <Slot label="减小字号" className="w-[34px]"><FontSizeIcon /></Slot>
        <span className="flex w-[46px] items-center gap-2 pl-[3px]"><Slot label="会计数字格式"><CurrencyIcon /></Slot><Caret /></span>
        <Slot label="百分比" className="w-9"><PercentIcon /></Slot>
        <Slot label="千位分隔" className="w-7"><CommaIcon /></Slot>
        <Slot label="合并后居中" className="w-9"><MergeIcon /></Slot>
      </div>
      <div className="flex h-9">
        <Slot label="加粗" className="w-[31px] text-[22px] font-bold">B</Slot>
        <Slot label="倾斜" className="w-[33px] font-['Liberation_Serif',serif] text-[24px] font-bold italic">I</Slot>
        <Slot label="居中" className="w-8 bg-[#c5c5c5]"><Lines rows={centered} /></Slot>
        <span className="flex w-[50px] items-center gap-[9px] pl-1"><Slot label="填充颜色"><BucketIcon /></Slot><Caret /></span>
        <span className="flex w-[50px] items-center gap-[9px] pl-1"><Slot label="字体颜色"><FontColorIcon /></Slot><Caret /></span>
        <span className="flex w-[50px] items-center gap-[10px] pl-[5px]"><Slot label="边框"><BorderIcon /></Slot><Caret /></span>
        <Slot label="增加小数位数" className="w-8"><DecimalIcon /></Slot>
        <Slot label="减少小数位数" className="w-8"><DecimalIcon less /></Slot>
        <Slot label="格式刷" className="w-8"><BrushIcon /></Slot>
      </div>
    </div>
  );
}

function LookupIcon() {
  return (
    <svg width="22" height="24" viewBox="0 0 22 24" fill="none" stroke="#4a80b8">
      <path d="M7 15l-6 7" strokeWidth="3.500" /><circle cx="13.500" cy="9" r="7.500" strokeWidth="1.800" />
      <path d="M13.500 8v5M12 8h1.500M12 13h3" stroke="#444" strokeWidth="1.400" /><circle cx="13.500" cy="5" r="1" fill="#444" stroke="none" />
    </svg>
  );
}

function TranslateIcon() {
  return (
    <svg width="22" height="24" viewBox="0 0 22 24" fontWeight="600" className="overflow-visible">
      <path d="M1 2l3 2 4-2-1 4 2 4-5-1-3 2z" fill="#0078d4" />
      <text x="0" y="22" fontSize="16" fill="#0078d4" fontFamily="Open Sans, sans-serif">a</text>
      <text x="10" y="11" fontSize="12" fill="#107c10" fontFamily="Noto Sans CJK JP, sans-serif">あ</text>
      <path d="M12 14h8v9l-3-2-4 2 1-4z" fill="#107c10" />
    </svg>
  );
}

function QuickAnalysisIcon() {
  return (
    <svg width="22" height="24" viewBox="0 0 22 24">
      <path d="M3 4h17.500v19H3z" fill="#fff" stroke="#666" strokeWidth="1.300" /><path d="M9 3h12v5H9z" fill="#666" />
      <path d="M8 10h7v3H7z" fill="#d9562f" /><path d="M5 14h12v3H5z" fill="#4a80b8" /><path d="M5 18h12v3H5z" fill="#6aa68f" />
      <path d="M5 0h8L9 5h3L2 14l3-7H0z" fill="#ebc383" stroke="#fff" strokeWidth=".6" />
    </svg>
  );
}

function TableDataIcon() {
  return (
    <svg width="24" height="24" viewBox="0 0 24 24" fill="none" stroke="#999">
      <path d="M1 9h22M1 13.500h22M1 18h22M8 4v19M15.500 4v19" /><path d="M1 1h22v22H1z" stroke="#666" strokeWidth="1.400" />
      <path d="M0 0h24v5H0z" fill="#4a80b8" stroke="none" /><path d="M3 1.500h3L4.500 3.500zM10.500 1.500h3L12 3.500zM18 1.500h3l-1.500 2z" fill="#fff" stroke="none" />
    </svg>
  );
}

function CommentIcon() {
  return (
    <svg width="23" height="22" viewBox="0 0 23 22" fill="none">
      <path d="M10 3h12v13H11l-4 5v-5H2V10" stroke="#777" strokeWidth="1.300" /><path d="M4.500 0v9M0 4.500h9" stroke="#6aa68f" strokeWidth="2.600" />
    </svg>
  );
}

function FormatListIcon() {
  return (
    <svg width="20" height="23" viewBox="0 0 20 23" fill="none" stroke="#666">
      <path d="M1 1h18v21H1z" strokeWidth="1.400" /><path d="M0 0h20v4H0z" fill="#4a80b8" stroke="none" />
      <path d="M8 8h8M8 13h8M8 18h8" strokeWidth="1.300" /><circle cx="4.500" cy="8" r="1" /><circle cx="4.500" cy="13" r="1" /><circle cx="4.500" cy="18" r="1" />
    </svg>
  );
}

function PinyinIcon() {
  return (
    <svg width="24" height="26" viewBox="0 0 24 26" textAnchor="middle" className="overflow-visible">
      <text x="12" y="9" fontSize="11" fontWeight="600" fill="#555" fontFamily="Open Sans, sans-serif">wén</text>
      <text x="12" y="24" fontSize="15" fill="#4a80b8" fontFamily="Noto Sans CJK SC, sans-serif">文</text>
    </svg>
  );
}

function LinkIcon() {
  return (
    <svg width="23" height="24" viewBox="0 0 23 24" fill="none" stroke="#666" strokeWidth="1.200">
      <circle cx="9" cy="9" r="8" /><ellipse cx="9" cy="9" rx="3.500" ry="8" /><path d="M1 9h16M2.500 5h13M2.500 13h6" />
      <path d="M11 15h-2a4 4 0 0 0 0 7h4M16 15h2a3.800 3.800 0 0 1 0 7.500h-2q-3 0-3-3.500M14 17q-2-2-4-2" stroke="#4a80b8" strokeWidth="2.400" />
    </svg>
  );
}

type MenuItem = { text: string; hotkey?: string; tail?: string; icon?: ReactNode; submenu?: boolean };

const afterPaste: MenuItem[][] = [
  [{ text: "选择性粘贴", hotkey: "S", tail: "..." }],
  [{ text: "智能查找", hotkey: "L", icon: <LookupIcon /> }],
  [
    { text: "插入", hotkey: "I", tail: "..." },
    { text: "删除", hotkey: "D", tail: "..." },
    { text: "清除内容", hotkey: "N" },
  ],
  [{ text: "翻译", icon: <TranslateIcon /> }],
  [
    { text: "快速分析", hotkey: "Q", icon: <QuickAnalysisIcon /> },
    { text: "筛选", hotkey: "E", submenu: true },
    { text: "排序", hotkey: "O", submenu: true },
  ],
  [{ text: "从表格/区域获取数据", hotkey: "G", tail: "...", icon: <TableDataIcon /> }],
  [{ text: "插入批注", hotkey: "M", icon: <CommentIcon /> }],
  [
    { text: "设置单元格格式", hotkey: "F", tail: "...", icon: <FormatListIcon /> },
    { text: "从下拉列表中选择", hotkey: "K", tail: "..." },
    { text: "显示拼音字段", hotkey: "S", icon: <PinyinIcon /> },
    { text: "定义名称", hotkey: "A", tail: "..." },
    { text: "链接", hotkey: "I", icon: <LinkIcon /> },
  ],
];

function MenuRow({ item, active }: { item: MenuItem; active?: boolean }) {
  return (
    <button
      type="button"
      role="menuitem"
      className={`flex h-9 w-full items-center text-left whitespace-nowrap ${active ? "bg-[#c5c5c5] text-[#333]" : ""}`}
    >
      <span className="flex w-9 justify-center">{item.icon}</span>
      <span className="flex-1 pl-[11px]">
        {item.text}
        {item.hotkey && <>(<u className="underline-offset-2">{item.hotkey}</u>)</>}
        {item.tail}
      </span>
      {item.submenu && <SideArrow className="mr-[14px] text-[#666666]" />}
    </button>
  );
}

function ContextMenu() {
  return (
    <div role="menu" className="absolute top-[260px] left-[206px] w-[295px] border border-[#c6c6c6] bg-white p-px text-[#5a5a5a] shadow-md">
      <MenuRow item={{ text: "剪切", hotkey: "T", icon: <ScissorsIcon /> }} />
      <MenuRow item={{ text: "复制", hotkey: "C", icon: <CopyIcon /> }} active />
      <div className="flex h-[34px] items-center font-bold text-[#6a6a6a]">
        <span className="flex w-9 justify-center"><PasteIcon className="h-6 w-[22px]" /></span>
        <span className="flex-1 self-stretch bg-[#eaeaea] pl-[11px] leading-[34px]">粘贴选项:</span>
      </div>
      <button type="button" role="menuitem" aria-label="粘贴" className="ml-[45px] flex h-11 items-center">
        <PasteIcon className="h-[34px] w-[31px]" />
      </button>
      {afterPaste.map((section, i) => (
        <div key={i}>
          {i > 0 && <hr className="mb-[3px] ml-12 border-[#e1e1e1]" />}
          {section.map((item) => (
            <MenuRow key={item.text} item={item} />
          ))}
        </div>
      ))}
    </div>
  );
}

function LevelMeter() {
  return (
    <svg width="16" height="90" viewBox="0 0 16 90" className="absolute top-[694px] right-0" aria-hidden="true">
      <rect x="1" y="1" width="22" height="88" rx="7" fill="#545868" stroke="#33363f" strokeWidth="2" />
      {Array.from({ length: 22 }, (_, i) => (
        <rect key={i} x="7" y={10 + i * 3.2} width="7" height="1.800" fill={i < 9 ? "#34373f" : i < 14 ? "#c9c94a" : i < 18 ? "#7fcf6a" : "#4fc9ac"} />
      ))}
    </svg>
  );
}

function Watermark() {
  return (
    <svg width="350" height="180" viewBox="1470 870 350 180" className="pointer-events-none absolute right-[100px] bottom-[30px]" aria-hidden="true">
      <g fill="#fff" fillOpacity=".88" stroke="#c4c4c4" strokeWidth="1.400">
        <text x="1473" y="982" fontSize="78" fontWeight="700" fontFamily="Liberation Sans, sans-serif">Bai</text>
        <ellipse cx="1605" cy="917" rx="13" ry="17" />
        <ellipse cx="1629" cy="893" rx="13" ry="18" />
        <ellipse cx="1660" cy="896" rx="13" ry="17" transform="rotate(10 1660 896)" />
        <ellipse cx="1680" cy="925" rx="13" ry="17" />
        <path d="M1642 920c-16 0-18 16-30 26-9 8-14 14-12 24 3 12 13 15 23 14 12-2 26-2 38 0 12 1 22-4 24-15 1-10-4-16-12-23-12-10-14-26-31-26z" />
        <text x="1641" y="973" textAnchor="middle" fontSize="46" fontWeight="700" fontFamily="Liberation Sans, sans-serif">du</text>
        <text x="1696" y="977" fontSize="58" fontWeight="700" fontFamily="Noto Sans CJK SC, sans-serif">经验</text>
      </g>
      <text x="1476" y="1027" fontSize="38" fontWeight="500" fill="#eeeeee" stroke="#bdbdbd" strokeWidth=".7" fontFamily="Noto Sans, sans-serif">jingyan.baidu.com</text>
    </svg>
  );
}

export default function App() {
  return (
    <div className="relative flex h-screen w-full flex-col overflow-hidden bg-[#e6e6e6] font-['Open_Sans','Noto_Sans_CJK_SC',sans-serif] text-[18px]">
      <header className="relative bg-[#217346]">
        <Circuit />
        <TitleBar />
        <TabBar />
      </header>
      <Ribbon />
      <FormulaBar />
      <Sheet />
      <SheetTabs />
      <StatusBar />
      <Taskbar />
      <MiniToolbar />
      <ContextMenu />
      <LevelMeter />
      <Watermark />
    </div>
  );
}
